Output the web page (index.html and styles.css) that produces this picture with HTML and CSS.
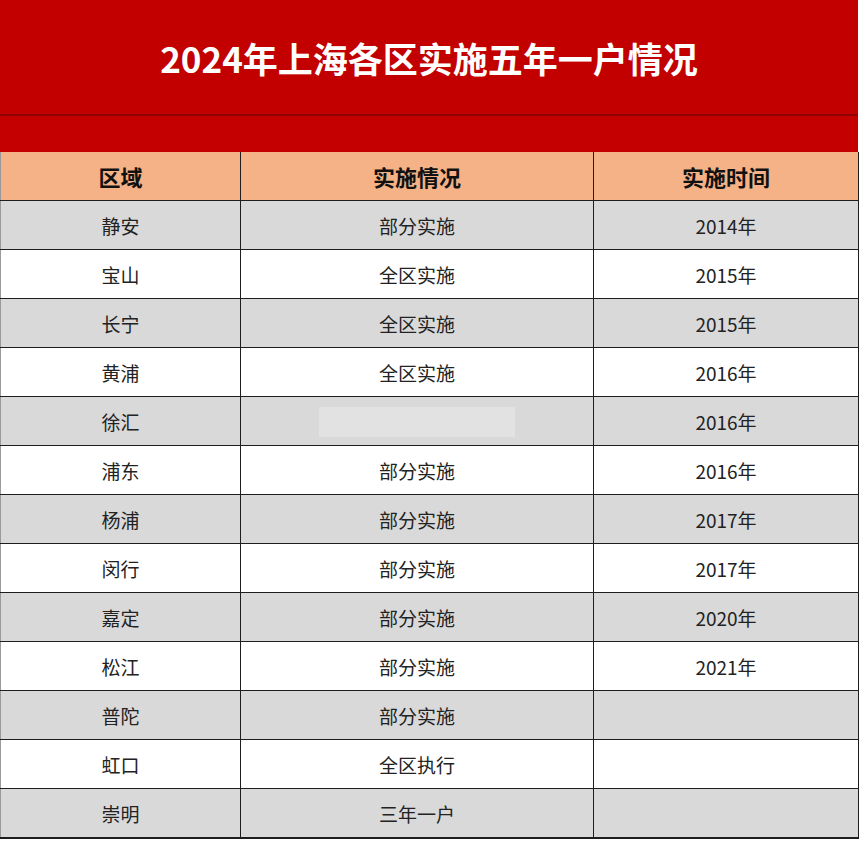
FILE: index.html
```html
<!DOCTYPE html>
<html lang="zh">
<head>
<meta charset="utf-8">
<link rel="stylesheet" href="styles.css">
</head>
<body>
<div class="sheet">
  <div class="banner">
    <h1 class="title">2024年上海各区实施五年一户情况</h1>
  </div>
  <div class="band"></div>
  <table class="grid">
    <colgroup><col class="c1"><col class="c2"><col class="c3"></colgroup>
    <thead>
      <tr><th>区域</th><th>实施情况</th><th>实施时间</th></tr>
    </thead>
    <tbody>
      <tr class="g"><td>静安</td><td>部分实施</td><td>2014年</td></tr>
      <tr><td>宝山</td><td>全区实施</td><td>2015年</td></tr>
      <tr class="g"><td>长宁</td><td>全区实施</td><td>2015年</td></tr>
      <tr><td>黄浦</td><td>全区实施</td><td>2016年</td></tr>
      <tr class="g"><td>徐汇</td><td><span class="blank"></span></td><td>2016年</td></tr>
      <tr><td>浦东</td><td>部分实施</td><td>2016年</td></tr>
      <tr class="g"><td>杨浦</td><td>部分实施</td><td>2017年</td></tr>
      <tr><td>闵行</td><td>部分实施</td><td>2017年</td></tr>
      <tr class="g"><td>嘉定</td><td>部分实施</td><td>2020年</td></tr>
      <tr><td>松江</td><td>部分实施</td><td>2021年</td></tr>
      <tr class="g"><td>普陀</td><td>部分实施</td><td></td></tr>
      <tr><td>虹口</td><td>全区执行</td><td></td></tr>
      <tr class="g"><td>崇明</td><td>三年一户</td><td></td></tr>
    </tbody>
  </table>
</div>
</body>
</html>
```
FILE: styles.css
```css
html, body {
  margin: 0;
  padding: 0;
  background: #ffffff;
}
body {
  font-family: "Noto Sans CJK SC", "Noto Sans", sans-serif;
  color: #1a1a1a;
}
.sheet {
  width: 858px;
}
.banner {
  height: 114px;
  background: #c20000;
  border-bottom: 2px solid #8e0404;
  display: flex;
  align-items: center;
  justify-content: center;
}
.title {
  margin: 0;
  color: #ffffff;
  font-size: 35px;
  font-weight: 700;
  letter-spacing: 0;
  transform: translateY(0);
}
.band {
  height: 36px;
  background: #c40000;
}
.grid {
  width: 858px;
  border-collapse: collapse;
  table-layout: fixed;
}
.c1 { width: 240px; }
.c2 { width: 353px; }
.c3 { width: 265px; }
.grid th, .grid td {
  border: 1px solid #1e1e1e;
  text-align: center;
  vertical-align: middle;
  padding: 0;
}
.grid th {
  height: 48px;
  background: #f4b286;
  font-size: 22px;
  font-weight: 700;
  color: #111;
  border-top: none;
}
.grid td {
  height: 48px;
  font-size: 19px;
  font-weight: 400;
  color: #222;
  background: #ffffff;
}
.grid tr.g td {
  background: #d9d9d9;
}
.grid tbody tr:last-child td {
  border-bottom: 2px solid #1e1e1e;
}
.grid th:first-child, .grid td:first-child {
  border-left: 1px solid #9a9a9a;
}
.blank {
  display: inline-block;
  width: 196px;
  height: 30px;
  background: #e2e2e2;
  vertical-align: middle;
}
```
